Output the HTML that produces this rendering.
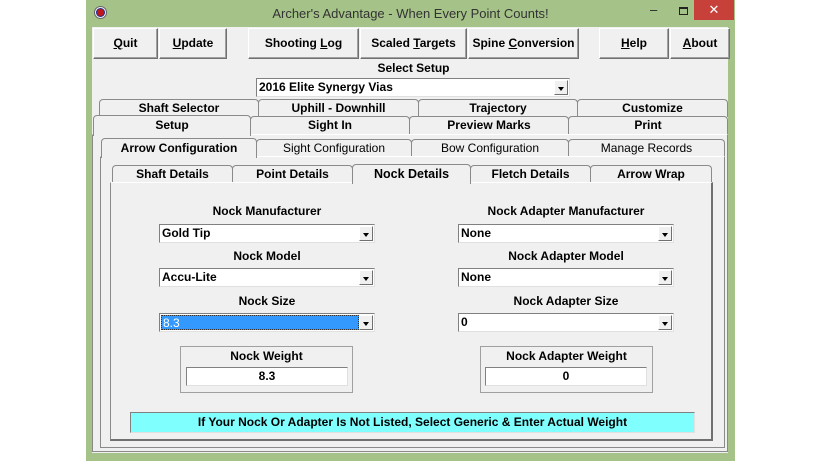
<!DOCTYPE html>
<html><head><style>
*{box-sizing:border-box;margin:0;padding:0}
body{width:820px;height:461px;background:#fff;position:relative;overflow:hidden;font-family:"Liberation Sans",Arial,sans-serif;font-size:12px;color:#000}
.a{position:absolute}
.win{left:86px;top:0;width:649px;height:461px;background:#a5c388}
.client{left:92px;top:27px;width:636px;height:426px;background:#f0f0f0}
.btn{position:absolute;top:28px;height:31px;background:#f0f0f0;border:1px solid;border-color:#fff #707070 #707070 #fff;box-shadow:inset -1px -1px 0 #a0a0a0;text-align:center;line-height:29px;font-weight:bold;font-size:12px}
.tab{position:absolute;height:18px;background:#f0f0f0;border:1px solid #8a8a8a;border-bottom:none;border-radius:4px 4px 0 0;text-align:center;font-weight:bold;font-size:12px;line-height:16px}
.lbl{position:absolute;font-weight:bold;font-size:12px;text-align:center}
.cb{position:absolute;height:19px;background:#fff;border:1px solid;border-color:#808080 #e0e0e0 #e0e0e0 #808080;font-weight:bold;font-size:12px;line-height:17px;padding-left:2px}
.cb .arr{position:absolute;right:1px;top:1px;width:14px;height:15px;background:#f0f0f0;border:1px solid;border-color:#fff #707070 #707070 #fff}
.cb .arr:after{content:"";position:absolute;left:3px;top:6px;border:3px solid transparent;border-top:4px solid #000;border-bottom:none}
</style></head><body>
<div class="a win"></div>
<div class="a" style="left:94px;top:6px;width:13px;height:13px;border-radius:50%;background:#eee;border:1px solid #666"></div>
<div class="a" style="left:97px;top:9px;width:7px;height:7px;border-radius:50%;background:#c01818;box-shadow:0 0 0 1px #2a2a90"></div>
<div class="a" style="left:86px;top:6px;width:649px;text-align:center;font-size:13px;color:#333">Archer's Advantage - When Every Point Counts!</div>
<div class="a" style="left:650px;top:2px;font-size:13px;color:#222">‒</div>
<div class="a" style="left:679px;top:7px;width:9px;height:8px;border:1px solid #222;border-top-width:2px"></div>
<div class="a" style="left:694px;top:0;width:40px;height:20px;background:#c8403a;color:#fff;text-align:center;font-size:13px;line-height:20px">✕</div>
<div class="a client"></div>
<div class="btn" style="left:93px;width:65px"><u>Q</u>uit</div>
<div class="btn" style="left:159px;width:68px"><u>U</u>pdate</div>
<div class="btn" style="left:248px;width:111px">Shooting <u>L</u>og</div>
<div class="btn" style="left:360px;width:107px">Scaled <u>T</u>argets</div>
<div class="btn" style="left:468px;width:111px">Spine <u>C</u>onversion</div>
<div class="btn" style="left:599px;width:70px"><u>H</u>elp</div>
<div class="btn" style="left:670px;width:60px"><u>A</u>bout</div>
<div class="lbl" style="left:257px;top:61px;width:313px">Select Setup</div>
<div class="cb" style="left:256px;top:78px;width:314px">2016 Elite Synergy Vias<div class="arr"></div></div>
<div class="tab" style="left:99px;top:99px;width:160px">Shaft Selector</div>
<div class="tab" style="left:258px;top:99px;width:161px">Uphill - Downhill</div>
<div class="tab" style="left:418px;top:99px;width:160px">Trajectory</div>
<div class="tab" style="left:577px;top:99px;width:151px">Customize</div>
<div class="tab" style="left:250px;top:116px;width:160px">Sight In</div>
<div class="tab" style="left:409px;top:116px;width:160px">Preview Marks</div>
<div class="tab" style="left:568px;top:116px;width:160px">Print</div>
<div class="a" style="left:92px;top:134px;width:636px;height:318px;border:1px solid #8a8a8a;border-top-color:#fff;background:#f0f0f0"></div>
<div class="tab" style="left:93px;top:115px;width:158px;height:21px;border-bottom:none;line-height:19px;z-index:2">Setup</div>
<div class="tab" style="left:256px;top:139px;width:156px;font-weight:normal">Sight Configuration</div>
<div class="tab" style="left:411px;top:139px;width:158px;font-weight:normal">Bow Configuration</div>
<div class="tab" style="left:568px;top:139px;width:157px;font-weight:normal">Manage Records</div>
<div class="a" style="left:100px;top:156px;width:625px;height:292px;border:1px solid #8a8a8a;border-top-color:#fff"></div>
<div class="tab" style="left:101px;top:138px;width:156px;height:20px;line-height:19px;z-index:2">Arrow Configuration</div>
<div class="tab" style="left:112px;top:165px;width:121px">Shaft Details</div>
<div class="tab" style="left:232px;top:165px;width:121px">Point Details</div>
<div class="tab" style="left:470px;top:165px;width:121px">Fletch Details</div>
<div class="tab" style="left:590px;top:165px;width:122px">Arrow Wrap</div>
<div class="a" style="left:110px;top:182px;width:603px;height:259px;border:1px solid #8a8a8a;border-top-color:#fff;border-right:2px solid #707070;border-bottom:2px solid #707070"></div>
<div class="tab" style="left:352px;top:164px;width:119px;height:20px;line-height:19px;font-size:12.5px;z-index:2">Nock Details</div>

<div class="lbl" style="left:159px;top:204px;width:216px">Nock Manufacturer</div>
<div class="cb" style="left:159px;top:224px;width:216px">Gold Tip<div class="arr"></div></div>
<div class="lbl" style="left:159px;top:249px;width:216px">Nock Model</div>
<div class="cb" style="left:159px;top:268px;width:216px">Accu-Lite<div class="arr"></div></div>
<div class="lbl" style="left:159px;top:294px;width:216px">Nock Size</div>
<div class="cb" style="left:159px;top:313px;width:216px;padding:0"><div style="position:absolute;left:1px;top:1px;width:198px;height:15px;background:#3399ff;color:#fff;font-weight:normal;line-height:15px;padding-left:1px;border:1px dotted #333">8.3</div><div class="arr"></div></div>
<div class="a" style="left:180px;top:346px;width:173px;height:47px;border:1px solid #a0a0a0"></div>
<div class="lbl" style="left:180px;top:349px;width:173px">Nock Weight</div>
<div class="cb" style="left:186px;top:367px;width:162px;text-align:center;padding:0">8.3</div>

<div class="lbl" style="left:458px;top:204px;width:216px">Nock Adapter Manufacturer</div>
<div class="cb" style="left:458px;top:224px;width:216px">None<div class="arr"></div></div>
<div class="lbl" style="left:458px;top:249px;width:216px">Nock Adapter Model</div>
<div class="cb" style="left:458px;top:268px;width:216px">None<div class="arr"></div></div>
<div class="lbl" style="left:458px;top:294px;width:216px">Nock Adapter Size</div>
<div class="cb" style="left:458px;top:313px;width:216px">0<div class="arr"></div></div>
<div class="a" style="left:480px;top:346px;width:173px;height:47px;border:1px solid #a0a0a0"></div>
<div class="lbl" style="left:480px;top:349px;width:173px">Nock Adapter Weight</div>
<div class="cb" style="left:485px;top:367px;width:162px;text-align:center;padding:0">0</div>

<div class="a" style="left:130px;top:412px;width:565px;height:21px;background:#80ffff;border:1px solid;border-color:#808080 #e0e0e0 #e0e0e0 #808080;text-align:center;font-weight:bold;line-height:19px">If Your Nock Or Adapter Is Not Listed, Select Generic &amp; Enter Actual Weight</div>
</body></html>
